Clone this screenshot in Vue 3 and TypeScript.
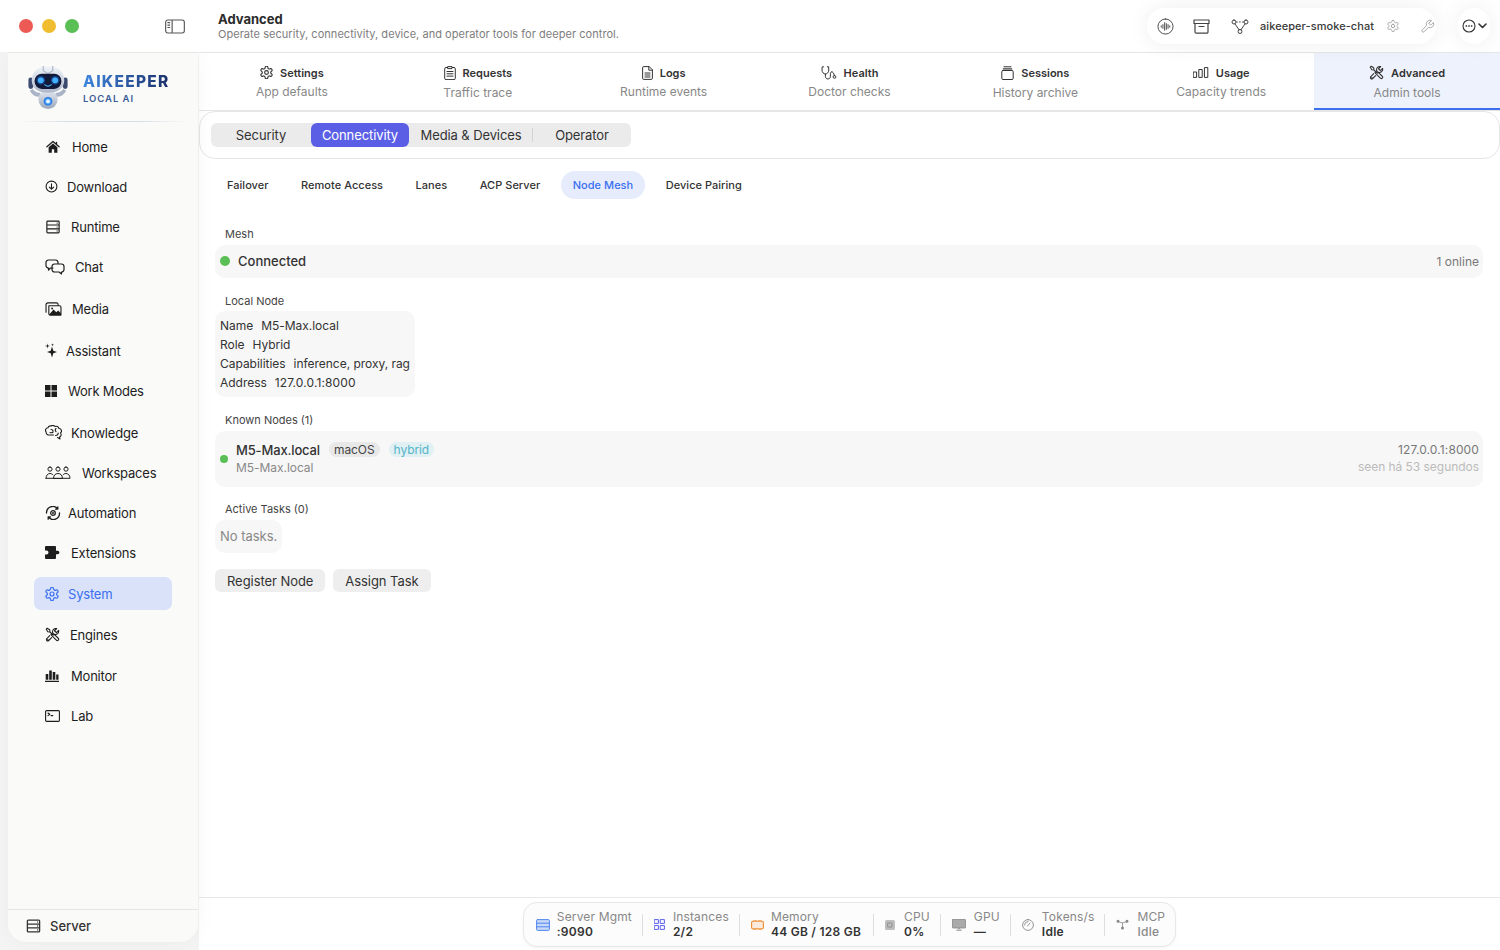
<script setup lang="ts">
import { h } from 'vue'

interface IconDef { w: number; h: number; vb?: string; s?: string; f?: string; sw?: number; fo?: number }

const Ico = (p: { i: IconDef }) =>
  h('svg', {
    width: p.i.w, height: p.i.h, viewBox: p.i.vb || '0 0 24 24', fill: 'none', stroke: 'currentColor',
    'stroke-width': p.i.sw || 1.6, 'stroke-linecap': 'round', 'stroke-linejoin': 'round',
    style: 'flex:none;display:block',
  }, [
    p.i.f ? h('path', { d: p.i.f, fill: 'currentColor', stroke: 'none', 'fill-rule': 'evenodd', 'fill-opacity': p.i.fo ?? 1 }) : null,
    p.i.s ? h('path', { d: p.i.s }) : null,
  ])
Ico.props = ['i']

const gearVb = '1.5 1.5 21 21'
const gear = 'M12.22 2h-.44a2 2 0 0 0-2 2v.18a2 2 0 0 1-1 1.73l-.43.25a2 2 0 0 1-2 0l-.15-.08a2 2 0 0 0-2.73.73l-.22.38a2 2 0 0 0 .73 2.73l.15.1a2 2 0 0 1 1 1.72v.51a2 2 0 0 1-1 1.74l-.15.09a2 2 0 0 0-.73 2.73l.22.38a2 2 0 0 0 2.73.73l.15-.08a2 2 0 0 1 2 0l.43.25a2 2 0 0 1 1 1.73V20a2 2 0 0 0 2 2h.44a2 2 0 0 0 2-2v-.18a2 2 0 0 1 1-1.73l.43-.25a2 2 0 0 1 2 0l.15.08a2 2 0 0 0 2.73-.73l.22-.39a2 2 0 0 0-.73-2.73l-.15-.08a2 2 0 0 1-1-1.74v-.5a2 2 0 0 1 1-1.74l.15-.09a2 2 0 0 0 .73-2.73l-.22-.38a2 2 0 0 0-2.73-.73l-.15.08a2 2 0 0 1-2 0l-.43-.25a2 2 0 0 1-1-1.73V4a2 2 0 0 0-2-2z M12 9a3 3 0 1 0 0 6a3 3 0 0 0 0-6z'
const tools = 'M3.5 2 2 3.5l2.5 4 3 .5.5-.5-.5-3z M7.8 7.8 12 12 M13.5 10.5 21.2 18a2.1 2.1 0 0 1-3 3l-7.700-7.500z M21.800 5.500 18.200 9l-3-3 3.500-3.500a5.200 5.200 0 0 0-6.300 6.600L9.600 11.900 M7.600 13.900 2.900 18.600a2.100 2.100 0 0 0 3 3l4.700-4.700 M21.800 5.500a5.200 5.200 0 0 1-6.600 6.100L13.800 13 M4.400 20.100l.1-.1'
const serverPath = 'M3 2h18a1.5 1.5 0 0 1 1.5 1.500v17A1.5 1.5 0 0 1 21 22H3a1.5 1.5 0 0 1-1.5-1.500v-17A1.5 1.5 0 0 1 3 2z M1.5 8.600h21 M1.5 15.300h21 M19 5.300h.1 M19 12h.1 M19 18.700h.1'

const nav: { label: string; mt: number; gap: number; active?: boolean; i: IconDef }[] = [
  { label: 'Home', mt: 0, gap: 11, i: { w: 16, h: 14, s: 'M1.500 11.500 12 2.500l10.500 9 M18 4v4', f: 'M12 6 4.500 12.500V22H10v-6h4v6h5.500v-9.500z', sw: 2.200 } },
  { label: 'Download', mt: 7, gap: 9, i: { w: 13, h: 13, s: 'M12 2a10 10 0 1 0 0 20a10 10 0 0 0 0-20z M12 7v10 M8 13l4 4 4-4', sw: 2 } },
  { label: 'Runtime', mt: 7, gap: 10, i: { w: 16, h: 14, s: serverPath, sw: 2 } },
  { label: 'Chat', mt: 7, gap: 10, i: { w: 20, h: 16, vb: '0 0 20 16', s: 'M8 9H5.500l-2 2V9A2.500 2.500 0 0 1 1 6.500v-3A2.500 2.500 0 0 1 3.500 1h7A2.500 2.500 0 0 1 13 3.500V5 M9.500 5h7A2.500 2.500 0 0 1 19 7.500v3a2.500 2.500 0 0 1-2.500 2.500v2L14 13H9.500A2.500 2.500 0 0 1 7 10.500v-3A2.500 2.500 0 0 1 9.500 5z', sw: 1.200 } },
  { label: 'Media', mt: 9, gap: 10, i: { w: 17, h: 14, vb: '0 0 18 15', s: 'M1 11V3a2 2 0 0 1 2-2h9a2 2 0 0 1 2 2 M4 4h11.500A1.500 1.500 0 0 1 17 5.500V14H5.500A1.500 1.500 0 0 1 4 12.500z', f: 'M4 14 9 8l3 3 2-2 3 3v2z M7.500 6a1 1 0 1 0 0 2 1 1 0 0 0 0-2z', sw: 1.200 } },
  { label: 'Assistant', mt: 9, gap: 9, i: { w: 12, h: 15, vb: '0 0 12 15', f: 'M7 3.500 8.300 7.700 12 9 8.300 10.300 7 14.500 5.700 10.300 2 9l3.700-1.300z M2.500 .5 3 2.500l2 .5-2 .5-.5 2-.5-2-2-.5 2-.5z M7.500 .3l.35 1.150 1.150.35-1.150.35-.35 1.150-.35-1.150L6 1.800l1.150-.35z' } },
  { label: 'Work Modes', mt: 7, gap: 11, i: { w: 12, h: 12, vb: '0 0 12 12', f: 'M0 0h5.500v5.500H0z M6.500 0H12v5.500H6.500z M0 6.500h5.500V12H0z M6.500 6.500H12V12H6.500z' } },
  { label: 'Knowledge', mt: 9, gap: 9, i: { w: 17, h: 15, vb: '0 0 17 15', s: 'M3 2.800A2.400 2.400 0 0 1 6 1a3 3 0 0 1 4 .5 3 3 0 0 1 4 2 2.500 2.500 0 0 1 1.500 4.500 2.500 2.500 0 0 1-1 4l.5 2-2.500-1.500 M3 2.800A2.500 2.500 0 0 0 1.200 7 2.500 2.500 0 0 0 4 10h4.500 M6 4.500c1.200 0 2 .8 2 2 M11 3.500c-1 1-1 2.200 0 3.200 M5 7.500c1 .4 2 .4 3-.2 M10.500 10.500c1.500 0 2.700-1 2.700-2.500', sw: 1.100 } },
  { label: 'Workspaces', mt: 7, gap: 11, i: { w: 26, h: 13, vb: '0 0 26 13', s: 'M5 1a2.100 2.100 0 1 0 0 4.200A2.100 2.100 0 0 0 5 1z M13 1a2.100 2.100 0 1 0 0 4.200A2.100 2.100 0 0 0 13 1z M21 1a2.100 2.100 0 1 0 0 4.200A2.100 2.100 0 0 0 21 1z M1 12.300c0-3 1.800-4.800 4-4.800 1.300 0 2.300.5 3 1.400 M8.500 12.300c0-3 2-4.800 4.500-4.800s4.500 1.800 4.500 4.800z M18 8.900c.7-.9 1.700-1.400 3-1.400 2.200 0 4 1.800 4 4.800H1', sw: 1 } },
  { label: 'Automation', mt: 7, gap: 7, i: { w: 16, h: 14, vb: '0 0 16 14', s: 'M1.500 7A6.200 6.200 0 0 1 12.500 2.800 M14.500 7A6.200 6.200 0 0 1 3.500 11.200 M12.800 .8v2.300h-2.300 M3.200 13.200v-2.300h2.300 M8 4.700a2.300 2.300 0 1 0 0 4.600 2.300 2.300 0 0 0 0-4.600z', f: 'M8 6a1 1 0 1 0 0 2 1 1 0 0 0 0-2z', sw: 1.300 } },
  { label: 'Extensions', mt: 7, gap: 11, i: { w: 15, h: 13, vb: '0 0 15 13', f: 'M0 1a1 1 0 0 1 1-1h9a1 1 0 0 1 1 1v3.800h1.700a1.700 1.700 0 1 1 0 3.400H11V12a1 1 0 0 1-1 1H1a1 1 0 0 1-1-1V8.500h1.500a2 2 0 1 0 0-4H0z' } },
  { label: 'System', mt: 8, gap: 9, active: true, i: { w: 14, h: 14, vb: gearVb, s: gear, sw: 1.800 } },
  { label: 'Engines', mt: 8, gap: 10, i: { w: 15, h: 15, s: tools, sw: 1.700 } },
  { label: 'Monitor', mt: 8, gap: 12, i: { w: 14, h: 13, vb: '0 0 14 13', s: 'M0 12.400h14', f: 'M.7 5h2.600v5.800H.7z M4.200 1.500h2.600v9.300H4.200z M7.700 3h2.600v7.800H7.700z M11.200 5.500h2.300v5.300h-2.300z', sw: 1.200 } },
  { label: 'Lab', mt: 7, gap: 11, i: { w: 15, h: 12, vb: '0 0 15 12', s: 'M1.500.6h12a.9.9 0 0 1 .9.9v9a.9.9 0 0 1-.9.9h-12a.9.9 0 0 1-.9-.9v-9a.9.9 0 0 1 .9-.9z M3 3l1.800 1.300L3 5.600 M6 5.600h1.800', sw: 1.100 } },
]

const tabs: { title: string; sub: string; active?: boolean; low?: boolean; i: IconDef }[] = [
  { title: 'Settings', sub: 'App defaults', i: { w: 13, h: 13, vb: gearVb, s: gear, sw: 1.800 } },
  { title: 'Requests', sub: 'Traffic trace', low: true, i: { w: 12, h: 14, vb: '0 0 12 14', s: 'M3.500 1.500H2A1.300 1.300 0 0 0 .7 2.800v9.500A1.300 1.300 0 0 0 2 13.600h8a1.300 1.300 0 0 0 1.300-1.300V2.800A1.300 1.300 0 0 0 10 1.500H8.500 M4 .6h4v2H4z M3 5.500h6 M3 7.800h6 M3 10.100h6', sw: 1 } },
  { title: 'Logs', sub: 'Runtime events', i: { w: 11, h: 14, vb: '0 0 11 14', s: 'M6.800.6H1.800A1.200 1.200 0 0 0 .6 1.800v10.400a1.200 1.200 0 0 0 1.200 1.200h7.400a1.200 1.200 0 0 0 1.200-1.200V4.200z M6.800.6v3.600h3.600 M3 7h5 M3 9h5 M3 11h5', sw: 1 } },
  { title: 'Health', sub: 'Doctor checks', i: { w: 16, h: 14, vb: '0 0 16 14', s: 'M2.500.8H1.200L1 4c0 2.400 1.700 4 3.400 4S7.800 6.400 7.800 4L7.600.8H6.300 M4.400 8v2.300c0 1.500 1 2.700 2.500 2.700s2.500-1.200 2.500-2.700V7.500c0-1 .6-1.700 1.500-1.700 M13.500 9.500a1.400 1.400 0 1 0 0 2.800 1.400 1.400 0 0 0 0-2.800z M11 6c1 0 2 1 2.300 3.500', sw: 1 } },
  { title: 'Sessions', sub: 'History archive', low: true, i: { w: 13, h: 14, vb: '0 0 13 14', s: 'M2 4.500h9a1.200 1.200 0 0 1 1.200 1.200v6.600a1.200 1.200 0 0 1-1.200 1.200H2A1.200 1.200 0 0 1 .8 12.300V5.700A1.200 1.200 0 0 1 2 4.500z M3 .8h7', f: 'M1.800 2.300h9.400V3.500H1.800z', sw: 1 } },
  { title: 'Usage', sub: 'Capacity trends', i: { w: 16, h: 11, vb: '0 0 16 11', s: 'M.6 5h3v5.400h-3z M6.200 2.500h3v7.900h-3z M11.800.6h3v9.800h-3z', sw: 1 } },
  { title: 'Advanced', sub: 'Admin tools', active: true, low: true, i: { w: 15, h: 15, s: tools, sw: 1.700 } },
]

const segments = [
  { label: 'Security', cls: '' },
  { label: 'Connectivity', cls: 'seg-active' },
  { label: 'Media & Devices', cls: 'seg-div' },
  { label: 'Operator', cls: '' },
]
const subs = ['Failover', 'Remote Access', 'Lanes', 'ACP Server', 'Node Mesh', 'Device Pairing']
const localNode = [
  ['Name', 'M5-Max.local'],
  ['Role', 'Hybrid'],
  ['Capabilities', 'inference, proxy, rag'],
  ['Address', '127.0.0.1:8000'],
]

const stats: { label: string; value: string; cls: string; muted?: boolean; wide?: boolean; gap: number; i: IconDef }[] = [
  { label: 'Server Mgmt', value: ':9090', cls: 'c-blue', gap: 7, i: { w: 14, h: 12, vb: '0 0 14 12', s: 'M1.500.6h11a.9.9 0 0 1 .9.9v9a.9.9 0 0 1-.9.9h-11a.9.9 0 0 1-.9-.9v-9a.9.9 0 0 1 .9-.9z M.6 4.200h12.800 M.6 7.800h12.800', f: 'M1 1h12v10H1z', fo: .3, sw: 1 } },
  { label: 'Instances', value: '2/2', cls: 'c-indigo', gap: 8, i: { w: 11, h: 11, vb: '0 0 11 11', s: 'M.6.6h3.800v3.800H.6z M6.600.6h3.800v3.800H6.600z M.6 6.600h3.800v3.800H.6z M6.600 6.600h3.800v3.800H6.600z', sw: 1 } },
  { label: 'Memory', value: '44 GB / 128 GB', cls: 'c-orange', wide: true, gap: 7, i: { w: 13, h: 10, vb: '0 0 13 10', s: 'M2 1.200h9A1.400 1.400 0 0 1 12.400 2.600v4.800A1.400 1.400 0 0 1 11 8.800H2A1.400 1.400 0 0 1 .6 7.400V2.600A1.400 1.400 0 0 1 2 1.200z M3 .3v.9 M5 .3v.9 M8 .3v.9 M10 .3v.9 M3 8.800v.9 M5 8.800v.9 M8 8.800v.9 M10 8.800v.9', f: 'M1 2h11v6H1z', fo: .15, sw: 1.100 } },
  { label: 'CPU', value: '0%', cls: 'c-gray', gap: 9, i: { w: 10, h: 10, vb: '0 0 10 10', s: 'M3 3h4v4H3z', f: 'M1.500 0h7A1.500 1.500 0 0 1 10 1.500v7A1.500 1.500 0 0 1 8.500 10h-7A1.500 1.500 0 0 1 0 8.500v-7A1.500 1.500 0 0 1 1.500 0z', fo: .55, sw: .8 } },
  { label: 'GPU', value: '—', cls: 'c-gray', gap: 8, i: { w: 14, h: 12, vb: '0 0 14 12', s: 'M1 .5h12a.5.5 0 0 1 .5.5v7.500a.5.5 0 0 1-.5.5H1a.5.5 0 0 1-.5-.5V1A.5.5 0 0 1 1 .5z', f: 'M1 .5h12a.5.5 0 0 1 .5.5v7.500a.5.5 0 0 1-.5.5H1a.5.5 0 0 1-.5-.5V1A.5.5 0 0 1 1 .5z M4.500 10.500h5V12h-5z M6 9h2v2H6z', fo: .7, sw: .8 } },
  { label: 'Tokens/s', value: 'Idle', cls: 'c-gray', gap: 8, i: { w: 12, h: 12, vb: '0 0 12 12', s: 'M6 .6a5.400 5.400 0 1 0 0 10.800A5.400 5.400 0 0 0 6 .6z M5.500 7 8 4 M2.500 6a3.500 3.500 0 0 1 3.500-3.500', sw: .9 } },
  { label: 'MCP', value: 'Idle', cls: 'c-gray', muted: true, gap: 8, i: { w: 13, h: 11, vb: '0 0 13 11', s: 'M2 2.500 6.500 4 11 2.500 M6.500 4v5', f: 'M2 .8a1.500 1.500 0 1 0 0 3 1.500 1.500 0 0 0 0-3z M11 .8a1.500 1.500 0 1 0 0 3 1.500 1.500 0 0 0 0-3z M6.500 7.500a1.500 1.500 0 1 0 0 3 1.500 1.500 0 0 0 0-3z', sw: .8 } },
]

const ic: Record<string, IconDef> = {
  toggle: { w: 20, h: 15, vb: '0 0 21 15', s: 'M3 .7h15a2.300 2.300 0 0 1 2.300 2.300v9a2.300 2.300 0 0 1-2.300 2.300H3A2.300 2.300 0 0 1 .7 12V3A2.300 2.300 0 0 1 3 .7z M7.500.7v13.600 M3 3.500h2 M3 6h2 M3 8.500h2', sw: 1.200 },
  wave: { w: 17, h: 17, vb: '0 0 18 18', s: 'M9 1a8 8 0 1 0 0 16A8 8 0 0 0 9 1z M4.500 8.300v1.400 M6.300 7v4 M8.100 5v8 M9.900 6v6 M11.700 7v4 M13.500 8.300v1.400', sw: 1 },
  archive: { w: 17, h: 15, vb: '0 0 17 15', s: 'M1 1h15v3.500H1z M2 4.500V13a1.200 1.200 0 0 0 1.200 1.200h10.600A1.200 1.200 0 0 0 15 13V4.500 M6 7.500h5', sw: 1.200 },
  nodes: { w: 18, h: 15, vb: '0 0 18 15', s: 'M3 1a2 2 0 1 0 0 4 2 2 0 0 0 0-4z M15 1a2 2 0 1 0 0 4 2 2 0 0 0 0-4z M9 10.500a2 2 0 1 0 0 4 2 2 0 0 0 0-4z M5.500 3h.8 M8.500 3h.8 M11.500 3h1 M4 5l4 5.700 M14 5l-4 5.700', sw: 1 },
  gearLight: { w: 12, h: 12, vb: gearVb, s: gear, sw: 1.700 },
  wrench: { w: 15, h: 15, s: 'M14.700 6.300a1 1 0 0 0 0 1.400l1.600 1.600a1 1 0 0 0 1.400 0l3.770-3.770a6 6 0 0 1-7.940 7.940l-6.910 6.910a2.120 2.120 0 0 1-3-3l6.910-6.910a6 6 0 0 1 7.940-7.940l-3.760 3.760z', sw: 1.500 },
  smile: { w: 14, h: 14, vb: '0 0 14 14', s: 'M7 1a6 6 0 1 0 0 12A6 6 0 0 0 7 1z', f: 'M3.600 6.200h1.500v1.500H3.600z M6.250 6.200h1.500v1.500h-1.500z M8.900 6.200h1.500v1.500H8.900z', sw: 1.100 },
  chev: { w: 9, h: 6, vb: '0 0 9 6', s: 'M1 1l3.500 3.500L8 1', sw: 1.600 },
  server: { w: 15, h: 14, s: serverPath, sw: 2.200 },
}
</script>

<template>
  <div class="app">
    <header class="titlebar">
      <div class="lights"><i class="dot red"></i><i class="dot yellow"></i><i class="dot green"></i></div>
      <Ico class="toggle" :i="ic.toggle" />
      <div class="title-block">
        <div class="title">Advanced</div>
        <div class="subtitle">Operate security, connectivity, device, and operator tools for deeper control.</div>
      </div>
      <div class="pill tools-pill">
        <Ico :i="ic.wave" />
        <Ico class="ml19" :i="ic.archive" />
        <Ico class="ml21" :i="ic.nodes" />
        <span class="pill-name">aikeeper-smoke-chat</span>
        <Ico class="light ml13" :i="ic.gearLight" />
        <Ico class="light ml21" :i="ic.wrench" />
      </div>
      <div class="pill menu-pill"><Ico :i="ic.smile" /><Ico :i="ic.chev" /></div>
    </header>

    <div class="body">
      <aside class="sidebar">
        <div class="brand">
          <svg class="robot" width="42" height="46" viewBox="0 0 44 46">
            <defs>
              <linearGradient id="head" x1="0" y1="0" x2="0" y2="1"><stop offset="0" stop-color="#f2f5fa" /><stop offset="1" stop-color="#aeb8c9" /></linearGradient>
              <linearGradient id="bodyg" x1="0" y1="0" x2="0" y2="1"><stop offset="0" stop-color="#e6ebf2" /><stop offset="1" stop-color="#9aa7bb" /></linearGradient>
              <radialGradient id="glow"><stop offset="0" stop-color="#ffffff" /><stop offset=".45" stop-color="#59b4ff" /><stop offset="1" stop-color="#1667e0" /></radialGradient>
            </defs>
            <path d="M14 33c-5 1-9-2-11-6l3-2c2 3 5 4 8 4z" fill="#a9b4c6" />
            <path d="M30 33c5 1 9-2 11-6l-3-2c-2 3-5 4-8 4z" fill="#a9b4c6" />
            <ellipse cx="22" cy="36" rx="10" ry="10" fill="url(#bodyg)" />
            <rect x="1.500" y="13" width="5" height="12" rx="2.500" fill="#3a4a70" />
            <rect x="37.500" y="13" width="5" height="12" rx="2.500" fill="#3a4a70" />
            <path d="M22 1c-11 0-17 7-17 15 0 9 7 13 17 13s17-4 17-13c0-8-6-15-17-15z" fill="url(#head)" />
            <path d="M17 1v5l5 3 5-3V1" fill="none" stroke="#9eaabc" stroke-width="1" />
            <rect x="8" y="9" width="28" height="16" rx="7.500" fill="#111a38" />
            <circle cx="14.500" cy="16" r="4.500" fill="#1e6fe6" opacity=".5" />
            <circle cx="29.500" cy="16" r="4.500" fill="#1e6fe6" opacity=".5" />
            <circle cx="14.500" cy="16" r="3" fill="#44b3ff" />
            <circle cx="29.500" cy="16" r="3" fill="#44b3ff" />
            <path d="M18.500 20.500c2 1.800 5 1.800 7 0" fill="none" stroke="#4aaefc" stroke-width="1.100" stroke-linecap="round" />
            <circle cx="22" cy="38" r="4.500" fill="url(#glow)" />
            <circle cx="22" cy="38" r="2" fill="#eaf6ff" />
          </svg>
          <div class="brand-text">
            <div class="brand-name">AIKEEPER</div>
            <div class="brand-sub">LOCAL AI</div>
          </div>
        </div>
        <div class="brand-rule"></div>
        <nav class="nav">
          <a v-for="n in nav" :key="n.label" class="nav-item" :class="{ active: n.active }" :style="{ marginTop: n.mt + 'px', gap: n.gap + 'px' }">
            <Ico :i="n.i" />
            <span>{{ n.label }}</span>
          </a>
        </nav>
        <div class="side-foot"><Ico :i="ic.server" /><span>Server</span></div>
      </aside>

      <main class="main">
        <div class="tabs">
          <div v-for="t in tabs" :key="t.title" class="tab" :class="{ active: t.active }">
            <div class="tab-top"><Ico :i="t.i" /><span>{{ t.title }}</span></div>
            <div class="tab-sub" :class="{ low: t.low }">{{ t.sub }}</div>
          </div>
        </div>

        <div class="seg-card">
          <div class="seg">
            <span v-for="s in segments" :key="s.label" class="seg-item" :class="s.cls">{{ s.label }}</span>
          </div>
        </div>

        <div class="subs">
          <span v-for="s in subs" :key="s" class="sub" :class="{ active: s === 'Node Mesh' }">{{ s }}</span>
        </div>

        <div class="content">
          <section class="sec first">
            <div class="sec-label">Mesh</div>
            <div class="card mesh">
              <i class="status-dot"></i><span class="mesh-state">Connected</span>
              <span class="mesh-count">1 online</span>
            </div>
          </section>

          <section class="sec tight">
            <div class="sec-label">Local Node</div>
            <div class="card inline local">
              <div v-for="r in localNode" :key="r[0]" class="kv"><span>{{ r[0] }}</span><span>{{ r[1] }}</span></div>
            </div>
          </section>

          <section class="sec">
            <div class="sec-label">Known Nodes (1)</div>
            <div class="card node">
              <i class="node-dot"></i>
              <div class="node-main">
                <div class="node-line">
                  <span class="node-name">M5-Max.local</span>
                  <span class="tag gray">macOS</span>
                  <span class="tag teal">hybrid</span>
                </div>
                <div class="node-host">M5-Max.local</div>
              </div>
              <div class="node-right">
                <div class="node-ip">127.0.0.1:8000</div>
                <div class="node-seen">seen há 53 segundos</div>
              </div>
            </div>
          </section>

          <section class="sec tasks">
            <div class="sec-label">Active Tasks (0)</div>
            <div class="card inline empty">No tasks.</div>
          </section>

          <div class="actions">
            <button class="btn">Register Node</button>
            <button class="btn">Assign Task</button>
          </div>
        </div>

        <footer class="statusbar">
          <div class="status-pill">
            <div v-for="(st, idx) in stats" :key="st.label" class="stat" :class="{ last: idx === stats.length - 1, wide: st.wide }" :style="{ gap: st.gap + 'px' }">
              <Ico :class="st.cls" :i="st.i" />
              <div class="stat-text">
                <div class="stat-label">{{ st.label }}</div>
                <div class="stat-value" :class="{ muted: st.muted }">{{ st.value }}</div>
              </div>
            </div>
          </div>
        </footer>
      </main>
    </div>
  </div>
</template>

<style>
html, body { margin: 0; padding: 0; background: #fff; overflow: hidden; }
</style>

<style scoped>
.app { width: 1500px; height: 950px; display: flex; flex-direction: column; font-family: Inter, "Noto Sans", sans-serif; color: #2a2a2a; overflow: hidden; background: #fff; }
.titlebar { flex: none; height: 52px; box-sizing: border-box; display: flex; align-items: center; padding: 0 10px 0 19px; background: #fff; position: relative; z-index: 3; }
.lights { display: flex; gap: 9px; }
.dot { width: 14px; height: 14px; border-radius: 50%; display: block; }
.red { background: #ed5a55; }
.yellow { background: #f1bd30; }
.green { background: #5abf55; }
.toggle { margin-left: 86px; color: #555; }
.title-block { margin-left: 33px; margin-top: 2px; }
.title { font-size: 13px; font-weight: 700; line-height: 15px; color: #2b2b2b; }
.subtitle { font-size: 11px; line-height: 15px; color: #7d7d7d; letter-spacing: .04px; }
.pill { height: 36px; border-radius: 18px; background: #fff; display: flex; align-items: center; box-shadow: 0 0 22px rgba(0, 0, 0, .07); }
.tools-pill { margin-left: auto; width: 289px; box-sizing: border-box; padding-left: 10px; color: #444; }
.menu-pill { margin-left: 22px; width: 32px; justify-content: center; gap: 2px; color: #333; }
.ml19 { margin-left: 19px; }
.ml21 { margin-left: 21px; }
.ml13 { margin-left: 13px; }
.pill-name { margin-left: 11px; font-size: 11px; font-weight: 500; color: #3a3a3a; white-space: nowrap; letter-spacing: .07px; }
.light { color: #a3a3a3; }

.body { flex: 1; min-height: 0; display: flex; background: #f4f4f4; }
.sidebar { flex: none; width: 190px; margin: 0 1px 8px 8px; display: flex; flex-direction: column; background: #fafaf9; border-radius: 0 0 18px 18px; border-top: 1px solid #e6e6e6; position: relative; z-index: 2; box-shadow: 0 0 20px rgba(0, 0, 0, .04); }
.brand { height: 68px; box-sizing: border-box; display: flex; align-items: center; padding: 0 0 0 19px; flex: none; }
.robot { flex: none; }
.brand-text { margin-left: 14px; padding-top: 3px; }
.brand-name { font-size: 15.5px; line-height: 18px; font-weight: 800; letter-spacing: 1.250px; background: linear-gradient(90deg, #3f86de, #1b2f6a); -webkit-background-clip: text; background-clip: text; color: transparent; }
.brand-sub { font-size: 9.500px; line-height: 12px; margin-top: 2px; font-weight: 600; letter-spacing: .950px; color: #3b5c98; }
.brand-rule { flex: none; height: 1px; margin: 0 12px 0 14px; background: linear-gradient(90deg, transparent, #d6dce6 30%, #d6dce6 70%, transparent); }
.nav { flex: 1; padding: 8px 26px 0; box-sizing: border-box; }
.nav-item { height: 33px; display: flex; align-items: center; padding-left: 11px; border-radius: 7px; font-size: 13px; letter-spacing: -.2px; color: #1d1d1d; }
.nav-item.active { background: #d9e2f9; color: #3b6ff0; }
.side-foot { flex: none; height: 32px; display: flex; align-items: center; gap: 9px; padding-left: 18px; border-top: 1px solid #e6e6e6; font-size: 13px; font-weight: 500; color: #333; }

.main { flex: 1; min-width: 0; display: flex; flex-direction: column; background: #fff; border-top: 1px solid #e6e6e6; }
.tabs { flex: none; height: 58px; box-sizing: border-box; display: grid; grid-template-columns: repeat(7, 1fr); border-bottom: 1px solid #e6e6e6; }
.tab { display: flex; flex-direction: column; align-items: center; padding-top: 12px; box-sizing: border-box; }
.tab.active { background: #eef2fc; border-bottom: 2px solid #3b6ff0; }
.tab-top { display: flex; align-items: center; gap: 7px; height: 15px; font-size: 11px; font-weight: 600; color: #333; }
.tab-sub { font-size: 12px; line-height: 15px; margin-top: 4px; color: #888; }
.tab-sub.low { margin-top: 5px; }
.seg-card { flex: none; height: 48px; box-sizing: border-box; border: 1px solid #e6e6e6; border-radius: 16px; padding: 11px; }
.seg { display: inline-grid; grid-template-columns: 100px 98px 124px 98px; height: 24px; border-radius: 6px; background: #ebebeb; }
.seg-item { display: flex; align-items: center; justify-content: center; font-size: 13px; letter-spacing: -.1px; color: #333; border-radius: 6px; position: relative; white-space: nowrap; }
.seg-active { background: #5b5fe6; color: #fff; }
.seg-div::after { content: ""; position: absolute; right: 0; top: 5px; bottom: 5px; width: 1px; background: #d2d2d2; }
.subs { flex: none; display: flex; margin: 12px 0 0 16px; }
.sub { height: 28px; display: flex; align-items: center; padding: 0 12px; margin-right: 8.500px; border-radius: 14px; font-size: 11px; font-weight: 500; letter-spacing: .03px; color: #333; }
.sub.active { background: #e6ecfb; color: #3b6ff0; }
.content { flex: 1; min-height: 0; padding: 0 17px 0 16px; }
.sec { margin-top: 16px; }
.sec.first { margin-top: 28px; }
.sec.tight .sec-label { margin-bottom: 3px; }
.sec.tasks { margin-top: 15px; }
.sec-label { height: 14px; line-height: 14px; margin-bottom: 4px; padding-left: 10px; font-size: 11px; color: #444; }
.card { background: #f7f7f7; border-radius: 10px; box-sizing: border-box; }
.inline { display: inline-block; vertical-align: top; }
.mesh { height: 33px; display: flex; align-items: center; padding: 0 4px 1px 5px; }
.status-dot { width: 10px; height: 10px; border-radius: 50%; background: #5abf55; }
.mesh-state { margin-left: 8px; font-size: 13px; font-weight: 500; color: #333; }
.mesh-count { margin-left: auto; font-size: 12px; color: #777; }
.local { padding: 5px; font-size: 12px; color: #333; letter-spacing: -.03px; }
.kv { line-height: 19px; height: 19px; white-space: nowrap; display: flex; gap: 8px; }
.kv:last-child span:last-child { letter-spacing: .12px; }
.node { height: 56px; display: flex; align-items: center; padding: 0 4px 2px 5px; }
.node-dot { width: 8px; height: 8px; border-radius: 50%; background: #5abf55; margin-top: 2px; }
.node-main { margin-left: 8px; }
.node-line { display: flex; align-items: center; height: 16px; }
.node-name { font-size: 13px; font-weight: 500; letter-spacing: -.15px; color: #333; }
.tag { height: 15px; line-height: 15px; padding: 0 5px; border-radius: 8px; font-size: 12px; letter-spacing: -.08px; }
.tag.gray { margin-left: 9px; background: #e8e8e8; color: #444; }
.tag.teal { margin-left: 9px; background: #e0f0f3; color: #54b4c9; }
.node-host { font-size: 12px; line-height: 15px; margin-top: 2px; color: #888; letter-spacing: -.05px; }
.node-right { margin-left: auto; text-align: right; font-size: 12px; line-height: 17px; }
.node-ip { color: #777; letter-spacing: .12px; }
.node-seen { color: #bbb; letter-spacing: -.04px; }
.empty { height: 33px; line-height: 33px; padding: 0 5px; font-size: 13px; color: #888; letter-spacing: -.02px; }
.actions { display: flex; gap: 8px; margin-top: 16px; }
.btn { height: 23px; padding: 0 12px; border: 0; border-radius: 6px; background: #eeeeee; font: 13px Inter, sans-serif; letter-spacing: -.06px; color: #333; }
.statusbar { flex: none; height: 53px; box-sizing: border-box; border-top: 1px solid #e8e8e8; display: flex; justify-content: center; padding-top: 4px; }
.status-pill { height: 45px; box-sizing: border-box; display: flex; align-items: center; padding: 0 1px; border: 1px solid #e8e8e8; border-radius: 14px; background: #fcfcfc; box-shadow: 0 1px 3px rgba(0, 0, 0, .05); }
.stat { height: 22px; display: flex; align-items: center; padding: 0 10px 0 11px; border-right: 1px solid #dedede; }
.stat.wide { padding-right: 12px; }
.stat.last { border-right: 0; padding-right: 9px; }
.stat-text { margin-top: -2px; }
.stat-label { font-size: 12px; line-height: 15px; letter-spacing: .15px; color: #888; white-space: nowrap; }
.stat-value { font-size: 12px; line-height: 15px; font-weight: 600; letter-spacing: .25px; color: #333; white-space: nowrap; }
.stat-value.muted { color: #888; font-weight: 500; }
.c-blue { color: #4f86ef; }
.c-indigo { color: #5a5ff0; }
.c-orange { color: #ee8a2e; }
.c-gray { color: #888; }
</style>
